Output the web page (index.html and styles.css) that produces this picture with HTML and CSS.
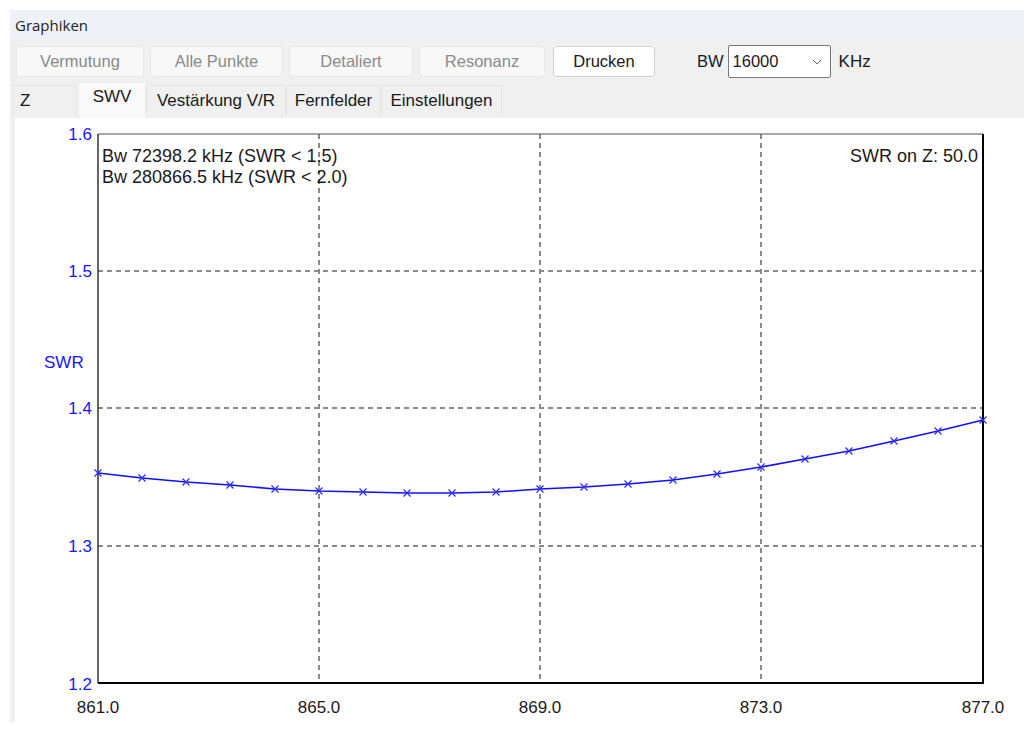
FILE: index.html
```html
<!DOCTYPE html>
<html lang="de">
<head>
    <meta charset="UTF-8">
    <title>Graphiken</title>
    <link rel="stylesheet" href="styles.css">
</head>
<body>
    <div class="window">
        <div class="titlebar">Graphiken</div>

        <div class="toolbar">
            <button class="btn w-vermutung" disabled>Vermutung</button>
            <button class="btn w-punkte" disabled>Alle Punkte</button>
            <button class="btn w-detail" disabled>Detaliert</button>
            <button class="btn w-resonanz" disabled>Resonanz</button>
            <button class="btn btn-active w-drucken">Drucken</button>
            <span class="bw-label">BW</span>
            <div class="select">
                <span>16000</span>
                <svg class="chevron" width="10" height="6" viewBox="0 0 10 6"><path d="M1 1 L5 5 L9 1" fill="none" stroke="#666" stroke-width="1"/></svg>
            </div>
            <span class="unit">KHz</span>
        </div>

        <div class="tabs">
            <div class="tab tab-z">Z</div>
            <div class="tab tab-swv active">SWV</div>
            <div class="tab tab-vest">Vestärkung V/R</div>
            <div class="tab tab-fern">Fernfelder</div>
            <div class="tab tab-einst">Einstellungen</div>
        </div>

        <div class="panel">
            <svg class="chart" width="1009" height="605" viewBox="15 118 1009 605">
                <!-- grid -->
                <g class="grid">
                    <line x1="319" y1="134" x2="319" y2="683"/>
                    <line x1="540" y1="134" x2="540" y2="683"/>
                    <line x1="761" y1="134" x2="761" y2="683"/>
                    <line x1="98" y1="271" x2="983" y2="271"/>
                    <line x1="98" y1="408" x2="983" y2="408"/>
                    <line x1="98" y1="546" x2="983" y2="546"/>
                </g>

                <!-- frame -->
                <line x1="98" y1="134" x2="983" y2="134" stroke="#555" stroke-width="1.2"/>
                <line x1="98" y1="134" x2="98" y2="683" stroke="#333" stroke-width="1.5"/>
                <line x1="983" y1="134" x2="983" y2="684" stroke="#000" stroke-width="2"/>
                <line x1="98" y1="683" x2="984" y2="683" stroke="#000" stroke-width="2"/>

                <!-- y axis -->
                <g class="ylab">
                    <text x="92" y="140">1.6</text>
                    <text x="92" y="277">1.5</text>
                    <text x="92" y="414">1.4</text>
                    <text x="92" y="552">1.3</text>
                    <text x="92" y="690">1.2</text>
                </g>
                <text class="ytitle" x="44" y="368">SWR</text>

                <!-- x axis -->
                <g class="xlab">
                    <text x="98" y="713">861.0</text>
                    <text x="319" y="713">865.0</text>
                    <text x="540" y="713">869.0</text>
                    <text x="761" y="713">873.0</text>
                    <text x="983" y="713">877.0</text>
                </g>

                <!-- notes -->
                <g class="note">
                    <text x="102" y="162">Bw 72398.2 kHz (SWR &lt; 1.5)</text>
                    <text x="102" y="183">Bw 280866.5 kHz (SWR &lt; 2.0)</text>
                    <text class="right" x="978" y="162">SWR on Z: 50.0</text>
                </g>

                <!-- curve -->
                <polyline class="curve" points="98,473 142,478 186,482 230,485 275,489 319,491 363,492 407,493 452,493 496,492 540,489 584,487 628,484 673,480 717,474 761,467 805,459 849,451 894,441 938,431 983,420"/>
                <g class="marks" id="marks"></g>
            </svg>
        </div>
    </div>

    <script>
        // draw the small x markers on each sample
        const pts = document.querySelector('.curve').getAttribute('points').trim().split(' ');
        const marks = document.getElementById('marks');
        pts.forEach(p => {
            const [x, y] = p.split(',').map(Number);
            const path = document.createElementNS('http://www.w3.org/2000/svg', 'path');
            path.setAttribute('d', `M${x - 3.5} ${y - 3.5} L${x + 3.5} ${y + 3.5} M${x - 3.5} ${y + 3.5} L${x + 3.5} ${y - 3.5}`);
            marks.appendChild(path);
        });
    </script>
</body>
</html>
```

FILE: styles.css
```css
:root {
    --chrome: #f0f0f0;
    --title-bg: #eef2f8;
    --blue: #1515ff;
    --grid: #8a8a8a;
}

body {
    margin: 0;
    background: #ffffff;
    font-family: "Liberation Sans", Arial, sans-serif;
    color: #1a1a1a;
}

.window {
    margin: 10px 0 0 10px;
}

.titlebar {
    height: 30px;
    line-height: 31px;
    padding-left: 5px;
    background: var(--title-bg);
    font-family: "Open Sans", "Noto Sans", sans-serif;
    font-size: 15px;
    color: #222;
}

.toolbar {
    display: flex;
    align-items: center;
    height: 42px;
    padding: 1px 6px 0;
    box-sizing: border-box;
    background: var(--chrome);
}

.btn {
    height: 31px;
    margin-right: 6px;
    border: 1px solid #e6e6e6;
    border-radius: 4px;
    background: #f8f8f8;
    color: #8a8a8a;
    font-family: "Liberation Sans", Arial, sans-serif;
    font-size: 16.5px;
    padding: 0;
}

.btn-active {
    background: #ffffff;
    border-color: #d2d2d2;
    color: #1a1a1a;
    margin-left: 2px;
}

.w-vermutung { width: 128px; }
.w-punkte { width: 133px; }
.w-detail { width: 124px; }
.w-resonanz { width: 126px; }
.w-drucken { width: 102px; }

.bw-label {
    margin-left: 36px;
    margin-right: 4px;
    font-size: 16.5px;
}

.select {
    display: flex;
    align-items: center;
    justify-content: space-between;
    box-sizing: border-box;
    width: 103px;
    height: 33px;
    padding: 0 8px 0 4px;
    border: 1px solid #7a7a7a;
    border-radius: 2px;
    background: #ffffff;
    font-size: 16.5px;
}

.unit {
    margin-left: 8px;
    font-size: 17px;
}

.tabs {
    display: flex;
    align-items: flex-end;
    height: 36px;
    padding-left: 3px;
    background: var(--chrome);
}

.tab {
    box-sizing: border-box;
    height: 30px;
    margin-bottom: 3px;
    line-height: 30px;
    font-size: 17px;
    text-align: center;
    background: #f0f0f0;
    border: 1px solid #e6e6e6;
    border-bottom: none;
}

.tab-z { width: 63px; text-align: left; padding-left: 6px; margin-right: 2px; }
.tab-swv { width: 68px; }
.tab-vest { width: 140px; }
.tab-fern { width: 95px; }
.tab-einst { width: 121px; }

.tab.active {
    height: 36px;
    margin-bottom: 0;
    line-height: 28px;
    background: #f9f9f9;
    border-color: #ececec;
}

.panel {
    height: 605px;
    border-left: 5px solid var(--chrome);
    background: #ffffff;
}

.chart {
    display: block;
    font-family: "Liberation Sans", Arial, sans-serif;
}

.grid line {
    stroke: var(--grid);
    stroke-width: 2;
    stroke-dasharray: 5 4;
}

.ylab text {
    fill: var(--blue);
    font-size: 17px;
    text-anchor: end;
}

.ytitle {
    fill: var(--blue);
    font-size: 17px;
}

.xlab text {
    fill: #1a1a1a;
    font-size: 17px;
    text-anchor: middle;
}

.note text {
    fill: #1a1a1a;
    font-size: 18px;
}

.note .right {
    text-anchor: end;
}

.curve {
    fill: none;
    stroke: #1010ff;
    stroke-width: 1.6;
}

.marks path {
    stroke: #2a2aff;
    stroke-width: 1.2;
}
```
